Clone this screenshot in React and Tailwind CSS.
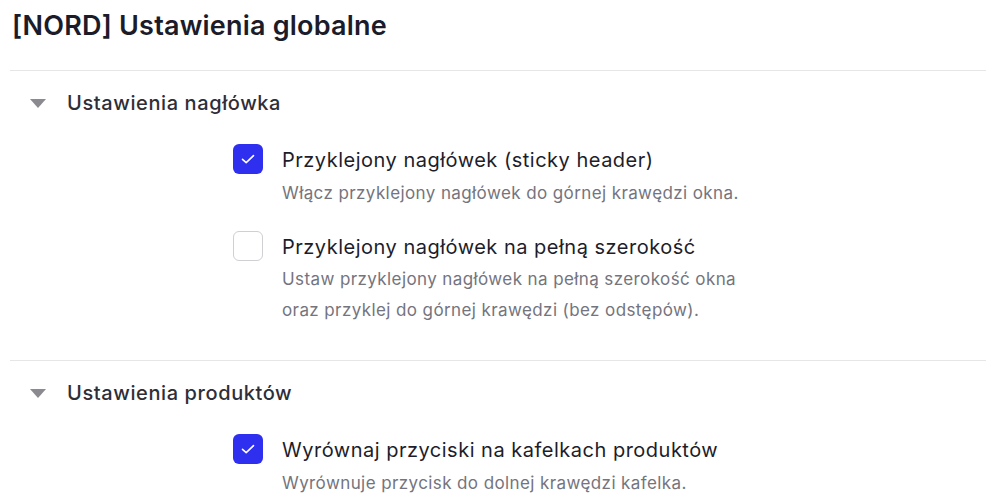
import React from 'react';

const sections = [
  {
    title: 'Ustawienia nagłówka',
    items: [
      {
        label: 'Przyklejony nagłówek (sticky header)',
        desc: 'Włącz przyklejony nagłówek do górnej krawędzi okna.',
        checked: true,
      },
      {
        label: 'Przyklejony nagłówek na pełną szerokość',
        desc: 'Ustaw przyklejony nagłówek na pełną szerokość okna oraz przyklej do górnej krawędzi (bez odstępów).',
        checked: false,
      },
    ],
  },
  {
    title: 'Ustawienia produktów',
    items: [
      {
        label: 'Wyrównaj przyciski na kafelkach produktów',
        desc: 'Wyrównuje przycisk do dolnej krawędzi kafelka.',
        checked: true,
      },
    ],
  },
];

function Checkbox({ checked }) {
  if (checked) {
    return (
      <div className="w-[30px] h-[30px] shrink-0 rounded-[6px] bg-[#2f2ff0] flex items-center justify-center">
        <svg width="14" height="14" viewBox="0 0 14 14" fill="none">
          <path d="M1.5 7.3 L5.2 10.6 L12.5 3.6" stroke="white" strokeWidth="1.6" strokeLinecap="round" strokeLinejoin="round" />
        </svg>
      </div>
    );
  }
  return <div className="w-[30px] h-[30px] shrink-0 rounded-[6px] border-[1.5px] border-[#cfcfd4] bg-white" />;
}

function Section({ section }) {
  return (
    <div className="border-t border-[#e6e6e8] pt-4 pb-[34px]">
      <div className="flex items-center h-8">
        <svg className="ml-[20px]" width="16" height="9" viewBox="0 0 16 9">
          <path d="M0 0 H16 L8 9 Z" fill="#8a8a90" />
        </svg>
        <span className="ml-[21px] text-[20px] font-medium text-[#2e2e38] tracking-[0.6px]">{section.title}</span>
      </div>
      <div className="mt-[25px] ml-[223px] flex flex-col gap-[22px]">
        {section.items.map((item) => (
          <div key={item.label} className="flex gap-[19px]">
            <Checkbox checked={item.checked} />
            <div>
              <div className="text-[20px] leading-[32px] text-[#1d1d2b] tracking-[0.5px]">{item.label}</div>
              <div className="mt-[1.5px] text-[17px] leading-[31px] text-[#74747e] max-w-[462px] tracking-[0.4px]">{item.desc}</div>
            </div>
          </div>
        ))}
      </div>
    </div>
  );
}

export default function App() {
  return (
    <div className="w-[1000px] h-[500px] overflow-hidden bg-white" style={{ fontFamily: 'Inter, "Noto Sans", sans-serif' }}>
      <div className="pl-[10px] pr-[14px]">
        <h1 className="pt-[9px] pl-[2px] text-[27px] leading-[34px] font-semibold text-[#1b1b2a] tracking-[0.2px]">
          [NORD] Ustawienia globalne
        </h1>
        <div className="mt-[27px]">
          {sections.map((s) => (
            <Section key={s.title} section={s} />
          ))}
        </div>
      </div>
    </div>
  );
}
